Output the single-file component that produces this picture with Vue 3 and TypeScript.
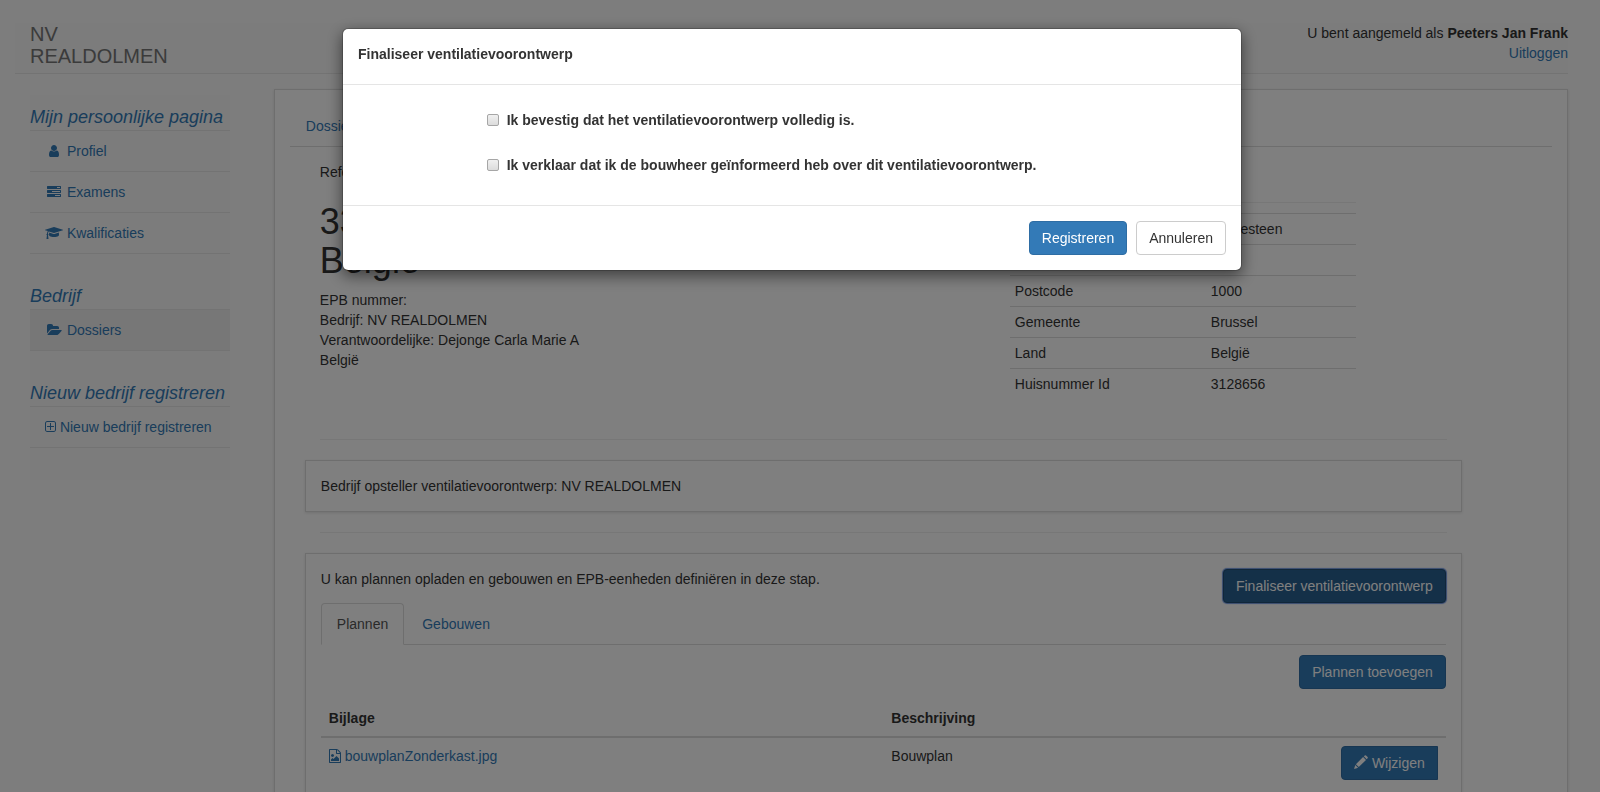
<script setup lang="ts">
import { ref } from 'vue'

interface Glyph {
  width: number
  path: string
}

interface MenuItem {
  label: string
  icon: string
  fixed: boolean
  active: boolean
}

interface MenuSection {
  title: string
  items: MenuItem[]
}

const glyphs: Record<string, Glyph> = {
  user: {
    width: 1280,
    path: 'M1280 137q0 -109 -62.500 -187t-150.500 -78h-854q-88 0 -150.500 78t-62.500 187q0 85 8.500 160.500t31.500 152t58.500 131t94 89t134.500 34.500q131 -128 313 -128t313 128q76 0 134.500 -34.500t94 -89t58.500 -131t31.500 -152t8.500 -160.500zM1024 1024q0 -159 -112.500 -271.500t-271.500 -112.500t-271.500 112.500t-112.500 271.500t112.500 271.500t271.500 112.500t271.500 -112.500t112.500 -271.500z',
  },
  tasks: {
    width: 1792,
    path: 'M1024 128h640v128h-640v-128zM640 640h1024v128h-1024v-128zM1280 1152h384v128h-384v-128zM1792 320v-256q0 -26 -19 -45t-45 -19h-1664q-26 0 -45 19t-19 45v256q0 26 19 45t45 19h1664q26 0 45 -19t19 -45zM1792 832v-256q0 -26 -19 -45t-45 -19h-1664q-26 0 -45 19t-19 45v256q0 26 19 45t45 19h1664q26 0 45 -19t19 -45zM1792 1344v-256q0 -26 -19 -45t-45 -19h-1664q-26 0 -45 19t-19 45v256q0 26 19 45t45 19h1664q26 0 45 -19t19 -45z',
  },
  graduation: {
    width: 2304,
    path: 'M1774 700l18 -316q4 -69 -82 -128t-235 -93.500t-323 -34.500t-323 34.500t-235 93.500t-82 128l18 316l574 -181q22 -7 48 -7t48 7zM2304 1024q0 -23 -22 -31l-1120 -352q-4 -1 -10 -1t-10 1l-652 206q-43 -34 -71 -111.500t-34 -178.500q63 -36 63 -109q0 -69 -58 -107l58 -433q2 -14 -8 -25q-9 -11 -24 -11h-192q-15 0 -24 11q-10 11 -8 25l58 433q-58 38 -58 107q0 73 65 111q11 207 98 330l-333 104q-22 8 -22 31t22 31l1120 352q4 1 10 1t10 -1l1120 -352q22 -8 22 -31z',
  },
  folder: {
    width: 1920,
    path: 'M1879 584q0 -31 -31 -66l-336 -396q-43 -51 -120.500 -86.500t-143.500 -35.500h-1088q-34 0 -60.500 13t-26.500 43q0 31 31 66l336 396q43 51 120.500 86.500t143.500 35.500h1088q34 0 60.500 -13t26.500 -43zM1536 928v-160h-832q-94 0 -197 -47.500t-164 -119.500l-337 -396l-5 -6q-1 8 -1 25v960q0 92 66 158t158 66h320q92 0 158 -66t66 -158v-32h544q92 0 158 -66t66 -158z',
  },
  plus: {
    width: 1408,
    path: 'M1152 736v-64q0 -14 -9 -23t-23 -9h-352v-352q0 -14 -9 -23t-23 -9h-64q-14 0 -23 9t-9 23v352h-352q-14 0 -23 9t-9 23v64q0 14 9 23t23 9h352v352q0 14 9 23t23 9h64q14 0 23 -9t9 -23v-352h352q14 0 23 -9t9 -23zM1280 288v832q0 66 -47 113t-113 47h-832q-66 0 -113 -47t-47 -113v-832q0 -66 47 -113t113 -47h832q66 0 113 47t47 113zM1408 1120v-832q0 -119 -84.500 -203.500t-203.500 -84.500h-832q-119 0 -203.500 84.500t-84.500 203.500v832q0 119 84.500 203.500t203.500 84.500h832q119 0 203.500 -84.500t84.500 -203.500z',
  },
  image: {
    width: 1536,
    path: 'M1468 1156q28 -28 48 -76t20 -88v-1152q0 -40 -28 -68t-68 -28h-1344q-40 0 -68 28t-28 68v1600q0 40 28 68t68 28h896q40 0 88 -20t76 -48zM1024 1400v-376h376q-10 29 -22 41l-313 313q-12 12 -41 22zM1408 -128v1024h-416q-40 0 -68 28t-28 68v416h-768v-1536h1280zM1280 320v-320h-1024v192l192 192l128 -128l384 384zM448 512q-80 0 -136 56t-56 136t56 136t136 56t136 -56t56 -136t-56 -136t-136 -56z',
  },
}

const glyphBox = (name: string): string => `0 0 ${glyphs[name].width} 1792`
const glyphWidth = (name: string): number => (glyphs[name].width * 14) / 1792

const sections: MenuSection[] = [
  {
    title: 'Mijn persoonlijke pagina',
    items: [
      { label: 'Profiel', icon: 'user', fixed: true, active: false },
      { label: 'Examens', icon: 'tasks', fixed: true, active: false },
      { label: 'Kwalificaties', icon: 'graduation', fixed: true, active: false },
    ],
  },
  {
    title: 'Bedrijf',
    items: [{ label: 'Dossiers', icon: 'folder', fixed: true, active: true }],
  },
  {
    title: 'Nieuw bedrijf registreren',
    items: [{ label: 'Nieuw bedrijf registreren', icon: 'plus', fixed: false, active: false }],
  },
]

const address: [string, string][] = [
  ['', 'Bredesteen'],
  ['', '\u00a0'],
  ['Postcode', '1000'],
  ['Gemeente', 'Brussel'],
  ['Land', 'België'],
  ['Huisnummer Id', '3128656'],
]

const complete = ref(false)
const informed = ref(false)
</script>

<template>
  <div class="page">
    <header class="top">
      <div class="company">NV<br />REALDOLMEN</div>
      <div class="session">
        U bent aangemeld als <strong>Peeters Jan Frank</strong><br />
        <a href="#">Uitloggen</a>
      </div>
    </header>

    <div class="columns">
      <div class="side">
        <nav class="menu">
          <section v-for="section in sections" :key="section.title">
            <h2>{{ section.title }}</h2>
            <ul>
              <li v-for="item in section.items" :key="item.label" :class="{ active: item.active }">
                <a href="#">
                  <span class="icon" :class="{ fixed: item.fixed }">
                    <svg :viewBox="glyphBox(item.icon)" :width="glyphWidth(item.icon)" height="14" aria-hidden="true">
                      <path :d="glyphs[item.icon].path" transform="translate(0 1536) scale(1 -1)" />
                    </svg>
                  </span>
                  {{ item.label }}
                </a>
              </li>
            </ul>
          </section>
        </nav>
      </div>

      <main class="panel">
        <ul class="tabs">
          <li><a href="#">Dossiers</a></li>
        </ul>

        <div class="content">
          <div class="summary">
            <div class="dossier">
              <p>Referentie</p>
              <h1>33<br />België</h1>
              <p>
                EPB nummer:<br />
                Bedrijf: NV REALDOLMEN<br />
                Verantwoordelijke: Dejonge Carla Marie A<br />
                België
              </p>
            </div>
            <div class="address">
              <hr />
              <table>
                <tbody>
                  <tr v-for="([name, value], index) in address" :key="index">
                    <th scope="row">{{ name }}</th>
                    <td>{{ value }}</td>
                  </tr>
                </tbody>
              </table>
            </div>
          </div>

          <hr class="rule" />
          <div class="box">Bedrijf opsteller ventilatievoorontwerp: NV REALDOLMEN</div>
          <hr class="rule" />

          <div class="box">
            <div class="intro">
              <span>U kan plannen opladen en gebouwen en EPB-eenheden definiëren in deze stap.</span>
              <button type="button" class="btn primary pressed">Finaliseer ventilatievoorontwerp</button>
            </div>
            <ul class="tabs">
              <li class="active"><a href="#">Plannen</a></li>
              <li><a href="#">Gebouwen</a></li>
            </ul>
            <div class="actions">
              <button type="button" class="btn primary">Plannen toevoegen</button>
            </div>
            <table class="files">
              <thead>
                <tr>
                  <th scope="col">Bijlage</th>
                  <th scope="col">Beschrijving</th>
                  <td></td>
                </tr>
              </thead>
              <tbody>
                <tr>
                  <td>
                    <a href="#">
                      <span class="icon">
                        <svg :viewBox="glyphBox('image')" :width="glyphWidth('image')" height="14" aria-hidden="true">
                          <path :d="glyphs.image.path" transform="translate(0 1536) scale(1 -1)" />
                        </svg>
                      </span>
                      bouwplanZonderkast.jpg
                    </a>
                  </td>
                  <td>Bouwplan</td>
                  <td class="tools">
                    <button type="button" class="btn primary grouped">
                      <svg class="pencil" viewBox="0 0 14 14" width="14" height="14" aria-hidden="true">
                        <path d="M0 14L1.300 9.900L4.100 12.700ZM1.900 9.200L9.100 2L12 4.900L4.800 12.100ZM9.800 1.300L10.800 0.400Q11.400 -0.100 12 0.400L13.600 2Q14.100 2.600 13.600 3.200L12.700 4.200Z" />
                      </svg>
                      Wijzigen
                    </button>
                  </td>
                </tr>
              </tbody>
            </table>
          </div>
        </div>
      </main>
    </div>

    <div class="backdrop">
      <div class="dialog" role="dialog" aria-modal="true" aria-labelledby="dialog-title">
        <div class="dialog-head">
          <h4 id="dialog-title">Finaliseer ventilatievoorontwerp</h4>
        </div>
        <div class="dialog-body">
          <label for="complete">
            <input id="complete" v-model="complete" type="checkbox" />
            Ik bevestig dat het ventilatievoorontwerp volledig is.
          </label>
          <label for="informed">
            <input id="informed" v-model="informed" type="checkbox" />
            Ik verklaar dat ik de bouwheer geïnformeerd heb over dit ventilatievoorontwerp.
          </label>
        </div>
        <div class="dialog-foot">
          <button type="button" class="btn primary">Registreren</button>
          <button type="button" class="btn">Annuleren</button>
        </div>
      </div>
    </div>
  </div>
</template>

<style>
body {
  margin: 0;
  overflow: hidden;
  background: #fbfbfb;
}
</style>

<style scoped>
.page,
.page * {
  box-sizing: border-box;
}

.page {
  min-height: 100vh;
  padding: 23px 32px 0 15px;
  font: 14px/20px "Liberation Sans", Arial, sans-serif;
  color: #333;
}

a {
  color: #337ab7;
  text-decoration: none;
}

p,
ul,
h1,
h2,
h4 {
  margin: 0;
  padding: 0;
}

ul {
  list-style: none;
}

table {
  width: 100%;
  border-collapse: collapse;
}

th {
  text-align: left;
}

.top {
  display: flex;
  justify-content: space-between;
  height: 51px;
  padding-left: 15px;
  background: #f8f8f8;
  border-bottom: 1px solid #e7e7e7;
}

.company {
  font-size: 20px;
  line-height: 22px;
  color: #777;
}

.session {
  text-align: right;
}

.columns {
  display: grid;
  grid-template-columns: 1fr 5fr;
  align-items: start;
  margin-top: 15px;
}

.side {
  padding: 6px 15px 0;
}

.menu {
  max-width: 200px;
  padding-top: 12px;
  background: #f8f8f8;
}

.menu section {
  padding-bottom: 32px;
}

.menu h2 {
  margin-bottom: 3px;
  font-size: 18px;
  font-style: italic;
  font-weight: 400;
  line-height: 20px;
  white-space: nowrap;
  color: #337ab7;
}

.menu ul {
  border-top: 1px solid #e7e7e7;
}

.menu li {
  border-bottom: 1px solid #e7e7e7;
}

.menu li a {
  display: block;
  padding: 10px 0 10px 15px;
  white-space: nowrap;
}

.menu .active {
  background: #eee;
}

.icon {
  display: inline-block;
  text-align: center;
}

.icon.fixed {
  width: 18px;
}

.icon svg {
  display: inline-block;
  vertical-align: -2px;
  fill: #337ab7;
  fill-rule: nonzero;
}

.panel {
  min-height: 760px;
  padding: 15px;
  background: #fff;
  border: 1px solid #ddd;
  box-shadow: 0 1px 3px rgba(0, 0, 0, 0.12);
}

.tabs {
  display: flex;
  gap: 2px;
  border-bottom: 1px solid #ddd;
}

.tabs li {
  margin-bottom: -1px;
}

.tabs a {
  display: block;
  padding: 10px 15px;
  border: 1px solid transparent;
  border-radius: 4px 4px 0 0;
}

.tabs .active a {
  color: #555;
  background: #fff;
  border-color: #ddd #ddd #fff;
}

.content {
  width: calc(100% * 11 / 12);
  margin-left: 15px;
  padding-top: 15px;
}

.summary {
  display: grid;
  grid-template-columns: 690fr 346fr 91fr;
  padding: 0 15px 20px;
}

.dossier h1 {
  margin: 20px 0 10px;
  font-size: 36px;
  font-weight: 400;
  line-height: 39px;
}

hr {
  height: 1px;
  margin: 20px 0 10px;
  border: 0;
  background: #eee;
}

.address {
  padding-top: 20px;
}

.address th,
.address td {
  padding: 5px;
  font-weight: 400;
  border-top: 1px solid #ddd;
}

.address th {
  width: 196px;
}

.rule {
  margin: 20px 15px;
}

.box {
  padding: 15px;
  background: #fff;
  border: 1px solid #ddd;
  box-shadow: 0 1px 3px rgba(0, 0, 0, 0.12);
}

.intro {
  display: flex;
  align-items: flex-start;
  justify-content: space-between;
}

.actions {
  display: flex;
  justify-content: flex-end;
  padding: 10px 0 11px;
}

.files {
  margin-bottom: 20px;
}

.files th,
.files td {
  padding: 8px;
  vertical-align: top;
}

.files th:first-child {
  width: 50%;
}

.files thead th,
.files thead td {
  border-bottom: 2px solid #ddd;
}

.tools {
  text-align: right;
}

.btn {
  display: inline-block;
  height: 34px;
  padding: 6px 12px;
  font: inherit;
  color: #333;
  vertical-align: top;
  background: #fff;
  border: 1px solid #ccc;
  border-radius: 4px;
}

.primary {
  color: #fff;
  background: #337ab7;
  border-color: #2e6da4;
}

.pressed {
  background: #286090;
  border-color: #204d74;
  box-shadow: 0 0 1px 1px #6f96e0;
}

.grouped {
  border-radius: 4px 0 0 4px;
}

.pencil {
  display: inline-block;
  vertical-align: -1px;
  fill: #fff;
}

.backdrop {
  position: fixed;
  inset: 0;
  padding: 28px 16px 0 0;
  background: rgba(0, 0, 0, 0.5);
}

.dialog {
  width: 100%;
  max-width: 900px;
  margin: 0 auto;
  background: #fff;
  background-clip: padding-box;
  border: 1px solid rgba(0, 0, 0, 0.2);
  border-radius: 6px;
  box-shadow: 0 5px 15px rgba(0, 0, 0, 0.5);
}

.dialog-head {
  padding: 15px 15px 20px;
  border-bottom: 1px solid #e5e5e5;
}

.dialog-head h4 {
  font-size: 14px;
  line-height: 20px;
}

.dialog-body {
  display: flex;
  flex-direction: column;
  align-items: flex-start;
  gap: 25px;
  padding: 25px 15px 30px 16%;
}

.dialog-body label {
  display: flex;
  gap: 8px;
  font-weight: 700;
}

.dialog-body input {
  flex: none;
  width: 12px;
  height: 12px;
  margin: 4px 0 0;
  appearance: none;
  background: linear-gradient(#f0f0f0, #dcdcdc);
  border: 1px solid #a6a6a6;
  border-radius: 2px;
}

.dialog-body input:checked {
  background: #337ab7;
}

.dialog-foot {
  display: flex;
  justify-content: flex-end;
  gap: 9px;
  padding: 15px;
  border-top: 1px solid #e5e5e5;
}
</style>
